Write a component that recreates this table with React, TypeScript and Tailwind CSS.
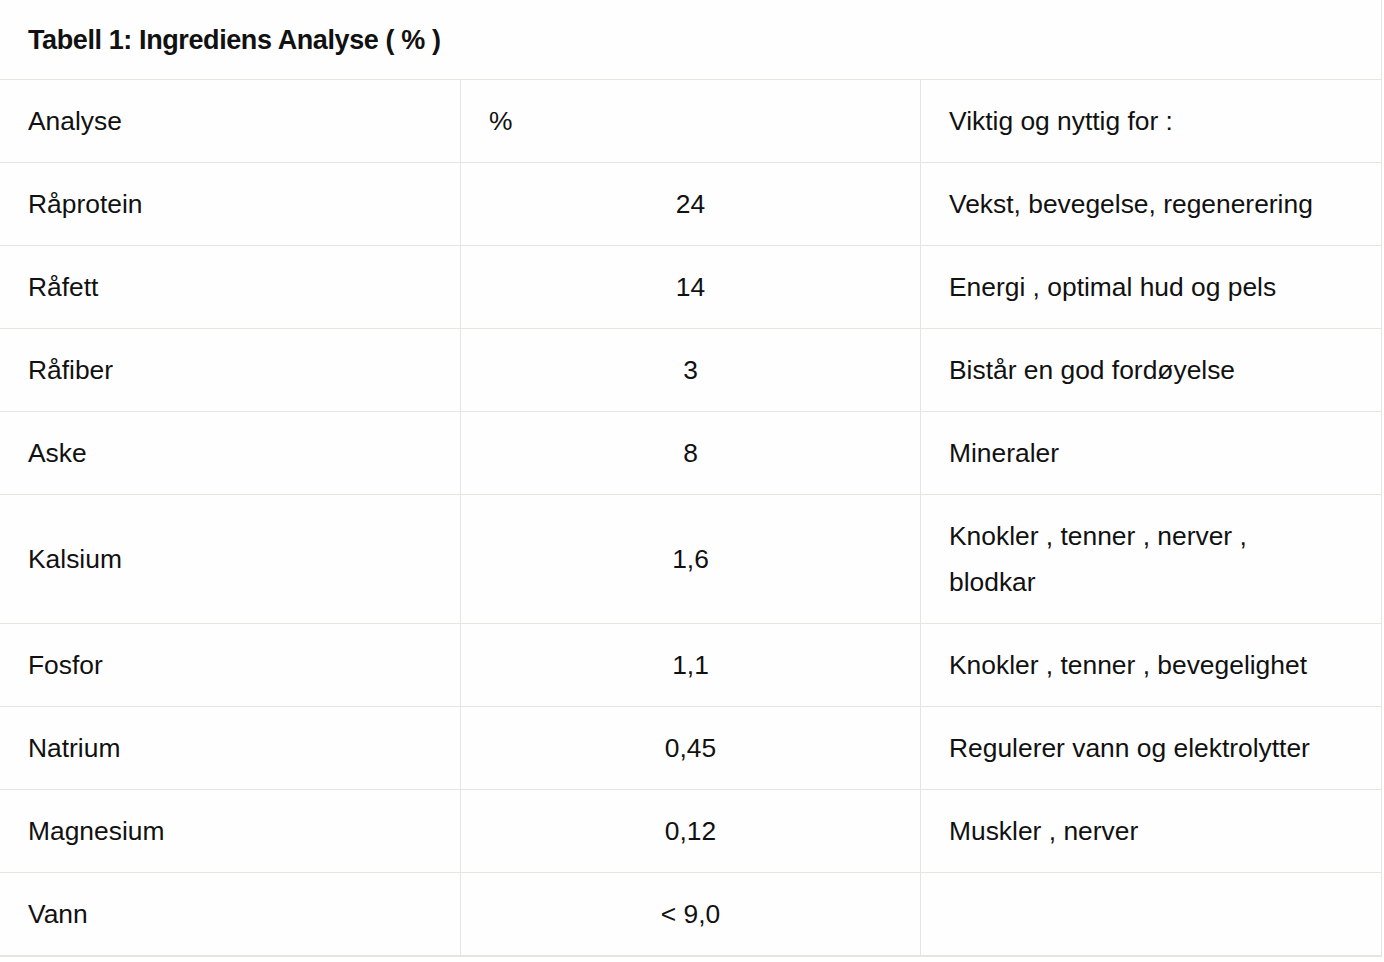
import { ReactNode } from "react";

const rows: { name: string; value: string; use: ReactNode }[] = [
  { name: "Råprotein", value: "24", use: "Vekst, bevegelse, regenerering" },
  { name: "Råfett", value: "14", use: "Energi , optimal hud og pels" },
  { name: "Råfiber", value: "3", use: "Bistår en god fordøyelse" },
  { name: "Aske", value: "8", use: "Mineraler" },
  {
    name: "Kalsium",
    value: "1,6",
    use: (
      <>
        Knokler , tenner , nerver ,<br />
        blodkar
      </>
    ),
  },
  { name: "Fosfor", value: "1,1", use: "Knokler , tenner , bevegelighet" },
  { name: "Natrium", value: "0,45", use: "Regulerer vann og elektrolytter" },
  { name: "Magnesium", value: "0,12", use: "Muskler , nerver" },
  { name: "Vann", value: "< 9,0", use: "" },
];

function Row({
  name,
  value,
  use,
  header = false,
}: {
  name: string;
  value: string;
  use: ReactNode;
  header?: boolean;
}) {
  return (
    <div className="grid grid-cols-[460px_460px_461px] border-t border-[#e6e6e1]">
      <div className="flex items-center px-[28px] py-[18px]">{name}</div>
      <div
        className={`flex items-center border-l border-[#e6e6e1] px-[28px] py-[18px] ${
          header ? "justify-start" : "justify-center"
        }`}
      >
        {value}
      </div>
      <div className="flex min-h-[82px] items-center whitespace-nowrap border-l border-[#e6e6e1] px-[28px] py-[18px]">
        <span>{use}</span>
      </div>
    </div>
  );
}

export default function App() {
  return (
    <div className="min-h-screen bg-white">
      <div
        className="w-[1382px] border-r border-b-2 border-[#e6e6e1] bg-[#fefefe] text-[26.4px] leading-[46px] text-[#111]"
        style={{ fontFamily: '"Liberation Sans", Arial, sans-serif' }}
      >
        <div className="flex h-[79px] items-center px-[28px]">
          <h1 className="text-[27px] font-semibold tracking-[-0.4px]">Tabell 1: Ingrediens Analyse ( % )</h1>
        </div>
        <Row name="Analyse" value="%" use="Viktig og nyttig for :" header />
        {rows.map((r) => (
          <Row key={r.name} {...r} />
        ))}
      </div>
    </div>
  );
}
